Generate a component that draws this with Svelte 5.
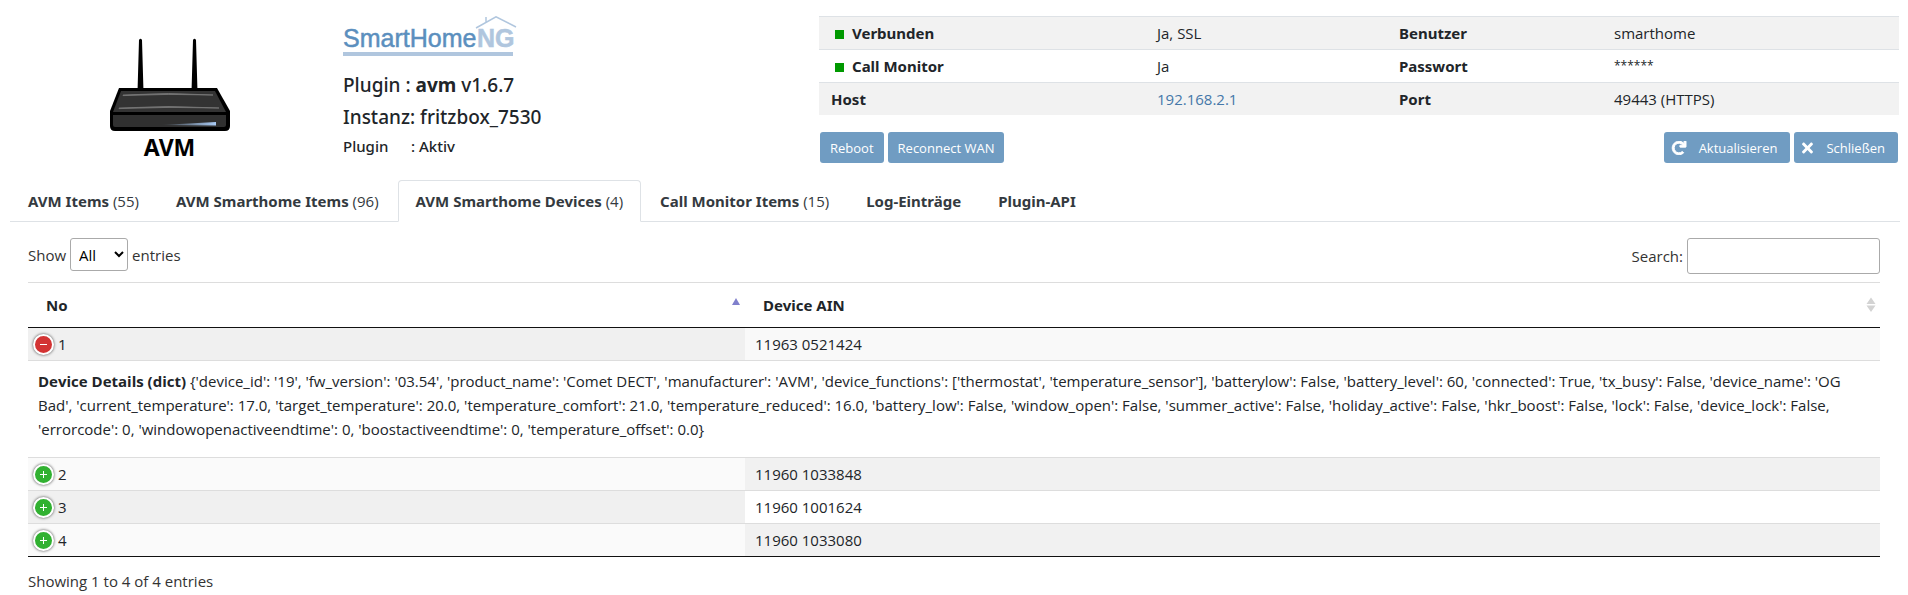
<script>
  const info = [
    { label: 'Verbunden', dot: true, value: 'Ja, SSL', label2: 'Benutzer', value2: 'smarthome' },
    { label: 'Call Monitor', dot: true, value: 'Ja', label2: 'Passwort', value2: '******', secret: true },
    { label: 'Host', link: true, value: '192.168.2.1', label2: 'Port', value2: '49443 (HTTPS)' }
  ];

  const tabs = [
    { name: 'AVM Items', count: 55 },
    { name: 'AVM Smarthome Items', count: 96 },
    { name: 'AVM Smarthome Devices', count: 4 },
    { name: 'Call Monitor Items', count: 15 },
    { name: 'Log-Einträge' },
    { name: 'Plugin-API' }
  ];
  let active = $state(2);

  const details =
    "{'device_id': '19', 'fw_version': '03.54', 'product_name': 'Comet DECT', 'manufacturer': 'AVM', 'device_functions': ['thermostat', 'temperature_sensor'], 'batterylow': False, 'battery_level': 60, 'connected': True, 'tx_busy': False, 'device_name': 'OG Bad', 'current_temperature': 17.0, 'target_temperature': 20.0, 'temperature_comfort': 21.0, 'temperature_reduced': 16.0, 'battery_low': False, 'window_open': False, 'summer_active': False, 'holiday_active': False, 'hkr_boost': False, 'lock': False, 'device_lock': False, 'errorcode': 0, 'windowopenactiveendtime': 0, 'boostactiveendtime': 0, 'temperature_offset': 0.0}";

  let rows = $state([
    { no: 1, ain: '11963 0521424', open: true, details },
    { no: 2, ain: '11960 1033848', open: false },
    { no: 3, ain: '11960 1001624', open: false },
    { no: 4, ain: '11960 1033080', open: false }
  ]);
</script>

<header>
  <div class="device">
    <svg class="router" viewBox="0 0 122 94" aria-hidden="true">
      <path d="M28.500 54 L30 2 Q31.500 -0.500 33 2 L34.500 54Z M82.500 54 L84 2 Q85.500 -0.500 87 2 L88.500 54Z" />
      <path d="M10 50 H108 L121 73 V88 Q121 93 116 93 H6 Q1 93 1 88 V73Z" />
      <path fill="#333" d="M12 53 H106 L117 74 H4Z" />
      <path fill="#303030" d="M4 77 H117 V87 Q117 89 115 89 H6 Q4 89 4 87Z" />
      <path fill="#777" d="M14 57 Q60 54 104 57 Q60 55.500 14 57.600Z M10 70 Q60 67 110 70 Q60 68.500 10 70.600Z" stroke="#777" stroke-width=".8" />
      <path fill="url(#glow)" d="M52 87 L107 84 V87.500Z" />
      <defs>
        <linearGradient id="glow"><stop offset="0" stop-color="#333" /><stop offset="1" stop-color="#a9cbf5" /></linearGradient>
      </defs>
    </svg>
    <strong>AVM</strong>
  </div>

  <div class="plugin">
    <svg class="logo" viewBox="0 0 174 42" role="img" aria-label="SmartHomeNG">
      <text x="0" y="31" fill="#5b8fbe" stroke="#5b8fbe" stroke-width=".5">SmartHome</text>
      <text x="134" y="31" fill="#b0c6de" stroke="#b0c6de" stroke-width=".5" font-weight="bold">NG</text>
      <path fill="none" stroke="#b0c6de" stroke-width="1.500" d="M133 12 L153 0.800 L173 11 M143 6 V1" />
      <rect y="36" width="170" height="4" fill="#b0c6de" />
    </svg>
    <p>Plugin : <b>avm</b> v1.6.7</p>
    <p>Instanz: fritzbox_7530</p>
    <p class="state"><span>Plugin</span>: Aktiv</p>
  </div>

  <div class="status">
    <table class="info">
      <tbody>
        {#each info as row}
          <tr>
            <th scope="row">{#if row.dot}<i class="dot"></i>{/if}{row.label}</th>
            <td>{#if row.link}<a href="#host">{row.value}</a>{:else}{row.value}{/if}</td>
            <th scope="row">{row.label2}</th>
            <td class:secret={row.secret}>{row.value2}</td>
          </tr>
        {/each}
      </tbody>
    </table>
    <div class="actions">
      <button>Reboot</button>
      <button>Reconnect WAN</button>
      <button class="icon push">
        <svg width="16" height="14" viewBox="-36 0 584 512" aria-hidden="true"><path d="M500.33 0h-47.41a12 12 0 0 0-12 12.57l4 82.76A247.42 247.42 0 0 0 256 8C119.34 8 7.9 119.53 8 256.19 8.1 393.07 119.1 504 256 504a247.1 247.1 0 0 0 166.18-63.91 12 12 0 0 0 .48-17.43l-34-34a12 12 0 0 0-16.38-.55A176 176 0 1 1 402.1 157.8l-101.53-4.87a12 12 0 0 0-12.57 12v47.41a12 12 0 0 0 12 12h200.33a12 12 0 0 0 12-12V12a12 12 0 0 0-12-12z" stroke="#fff" stroke-width="36" /></svg>
        Aktualisieren
      </button>
      <button class="icon">
        <svg width="13" height="16" viewBox="-32 0 416 512" aria-hidden="true"><path d="M242.72 256l100.07-100.07c12.28-12.28 12.28-32.19 0-44.48l-22.24-22.24c-12.28-12.28-32.19-12.28-44.48 0L176 189.28 75.93 89.21c-12.28-12.28-32.19-12.28-44.48 0L9.21 111.45c-12.28 12.28-12.28 32.19 0 44.48L109.28 256 9.21 356.07c-12.28 12.28-12.28 32.19 0 44.48l22.24 22.24c12.28 12.28 32.2 12.28 44.48 0L176 322.72l100.07 100.07c12.28 12.28 32.2 12.28 44.48 0l22.24-22.24c12.28-12.28 12.28-32.19 0-44.48L242.72 256z" /></svg>
        Schließen
      </button>
    </div>
  </div>
</header>

<nav>
  {#each tabs as tab, i}
    <button class:active={active === i} onclick={() => (active = i)}>
      <b>{tab.name}</b>{#if tab.count}{' '}({tab.count}){/if}
    </button>
  {/each}
</nav>

<main>
  <div class="controls">
    <label>Show
      <select><option>All</option><option>25</option><option>50</option></select>
      entries</label>
    <label>Search: <input type="search" /></label>
  </div>

  <table class="devices">
    <colgroup><col class="no" /><col /></colgroup>
    <thead>
      <tr>
        <th scope="col"><div>No <svg width="10" height="16" viewBox="0 0 10 16" aria-hidden="true"><path fill="#8080cc" d="M1 8 L5 1 L9 8Z" /></svg></div></th>
        <th scope="col"><div>Device AIN <svg width="10" height="16" viewBox="0 0 10 16" aria-hidden="true"><path fill="#d3d3d3" d="M0.500 7 L5 0.500 L9.500 7Z M0.500 8.500 L5 15 L9.500 8.500Z" /></svg></div></th>
      </tr>
    </thead>
    <tbody>
      {#each rows as row}
        <tr class:odd={row.no % 2 === 1}>
          <td>
            <div class="cell">
              <button class="toggle" class:open={row.open} aria-label="Details {row.no}" onclick={() => (row.open = !row.open)}>
                <svg width="9" height="9" viewBox="0 0 9 9" aria-hidden="true"><path stroke="#fff" d={row.open ? 'M1 4.5 H8' : 'M1 4.5 H8 M4.5 1 V8'} /></svg>
              </button>
              {row.no}
            </div>
          </td>
          <td>{row.ain}</td>
        </tr>
        {#if row.open && row.details}
          <tr class="details"><td colspan="2"><b>Device Details (dict)</b> {row.details}</td></tr>
        {/if}
      {/each}
    </tbody>
  </table>
  <p class="summary">Showing 1 to 4 of 4 entries</p>
</main>

<style>
  :global(body) {
    font: 15px/24px "Open Sans", "Noto Sans", sans-serif;
    color: #212529;
    background: #fff;
  }
  button, input, select { font: inherit; color: inherit; }
  th, nav b, .plugin b { font-family: "Noto Sans", "Open Sans", sans-serif; }
  p { margin: 0; }
  table { width: 100%; border-collapse: collapse; table-layout: fixed; }
  th, td { text-align: left; }

  header {
    display: grid;
    grid-template-columns: 335px 1fr 1080px;
    padding: 16px 9px 0 8px;
  }
  .device {
    display: flex;
    flex-direction: column;
    align-items: center;
    padding: 22px 12px 0 0;
  }
  .router { width: 122px; height: 94px; }
  .device strong { font: bold 23px/30px "Noto Sans", sans-serif; color: #000; }
  .plugin { font-family: "Noto Sans", "Open Sans", sans-serif; font-size: 19px; font-weight: 500; }
  .logo { display: block; width: 174px; height: 42px; margin-bottom: 11px; }
  .logo text { font-family: "Liberation Sans", Arial, sans-serif; font-size: 25px; }
  .plugin p { line-height: 32px; }
  .plugin .state { font-size: 15px; line-height: 26px; }
  .state span { display: inline-block; width: 68px; }

  .info td, .info th {
    box-sizing: border-box;
    padding: 4px 12px;
    border-top: 1px solid #dee2e6;
  }
  .info tr:nth-child(odd) { background: #f2f2f2; }
  .info tr > :nth-child(1) { width: 326px; }
  .info tr > :nth-child(2) { width: 242px; }
  .info tr > :nth-child(3) { width: 215px; }
  .info a { color: #4578a9; text-decoration: none; }
  .info .secret { font-size: 12px; }
  .dot {
    display: inline-block;
    width: 9px;
    height: 9px;
    margin: 0 8px 0 4px;
    background: #090;
  }
  .actions { display: flex; gap: 4px; margin-top: 17px; padding: 0 1px; }
  .actions button {
    display: flex;
    align-items: center;
    height: 31px;
    padding: 0 10px;
    border: 0;
    border-radius: 3px;
    background: #709cc2;
    color: #fff;
    font-size: 13px;
  }
  .actions svg { fill: #fff; }
  .actions .icon { gap: 12px; padding: 0 13px 0 7px; }
  .actions .push { margin-left: auto; }

  nav {
    display: flex;
    gap: 1px;
    margin: 17px 8px 0 10px;
    border-bottom: 1px solid #dee2e6;
  }
  nav button {
    height: 42px;
    margin-bottom: -1px;
    padding: 0 17px;
    border: 1px solid transparent;
    border-radius: 4px 4px 0 0;
    background: none;
    color: #343a40;
  }
  nav .active { border-color: #dee2e6 #dee2e6 #fff; background: #fff; }

  main { padding: 16px 28px 0; }
  .controls { display: flex; justify-content: space-between; color: #333; }
  label { display: flex; align-items: center; gap: 4px; }
  label:first-child { align-self: flex-start; }
  select, input {
    box-sizing: border-box;
    border: 1px solid #aaa;
    border-radius: 3px;
    background: #fff;
    color: #000;
  }
  select { width: 58px; height: 33px; padding: 4px; }
  input { width: 193px; height: 36px; padding: 5px; }

  .devices {
    margin-top: 8px;
    border-top: 1px solid #ddd;
    border-bottom: 1px solid #111;
  }
  .no { width: 717px; }
  .devices th { padding: 10px 4px 10px 18px; border-bottom: 1px solid #111; }
  .devices th div { display: flex; align-items: center; justify-content: space-between; }
  .devices td { padding: 4px 10px; border-top: 1px solid #ddd; background: #f9f9f9; }
  .devices tbody tr:first-child td { border-top: 0; }
  .devices tr td:first-child { background: #fafafa; }
  .devices tr td:nth-child(2) { background: #f1f1f1; }
  .devices tr.odd td:first-child { background: #f0f0f0; }
  .devices tr.odd td:nth-child(2) { background: #fff; }
  .devices tr.odd:first-child td:nth-child(2) { background: #f9f9f9; }
  .devices tr.details td { padding: 8px 10px 16px; background: #fff; }
  .devices tr td:first-child:not([colspan]) { padding-left: 5px; }
  .cell { display: flex; align-items: center; gap: 4px; }
  .toggle {
    display: flex;
    align-items: center;
    justify-content: center;
    box-sizing: border-box;
    width: 21px;
    height: 21px;
    padding: 0;
    border: 2px solid #fff;
    border-radius: 50%;
    background: #31b131;
    box-shadow: 0 0 3px #444;
  }
  .toggle.open { background: #d33333; }
  .summary { padding-top: 12px; color: #333; }
</style>
